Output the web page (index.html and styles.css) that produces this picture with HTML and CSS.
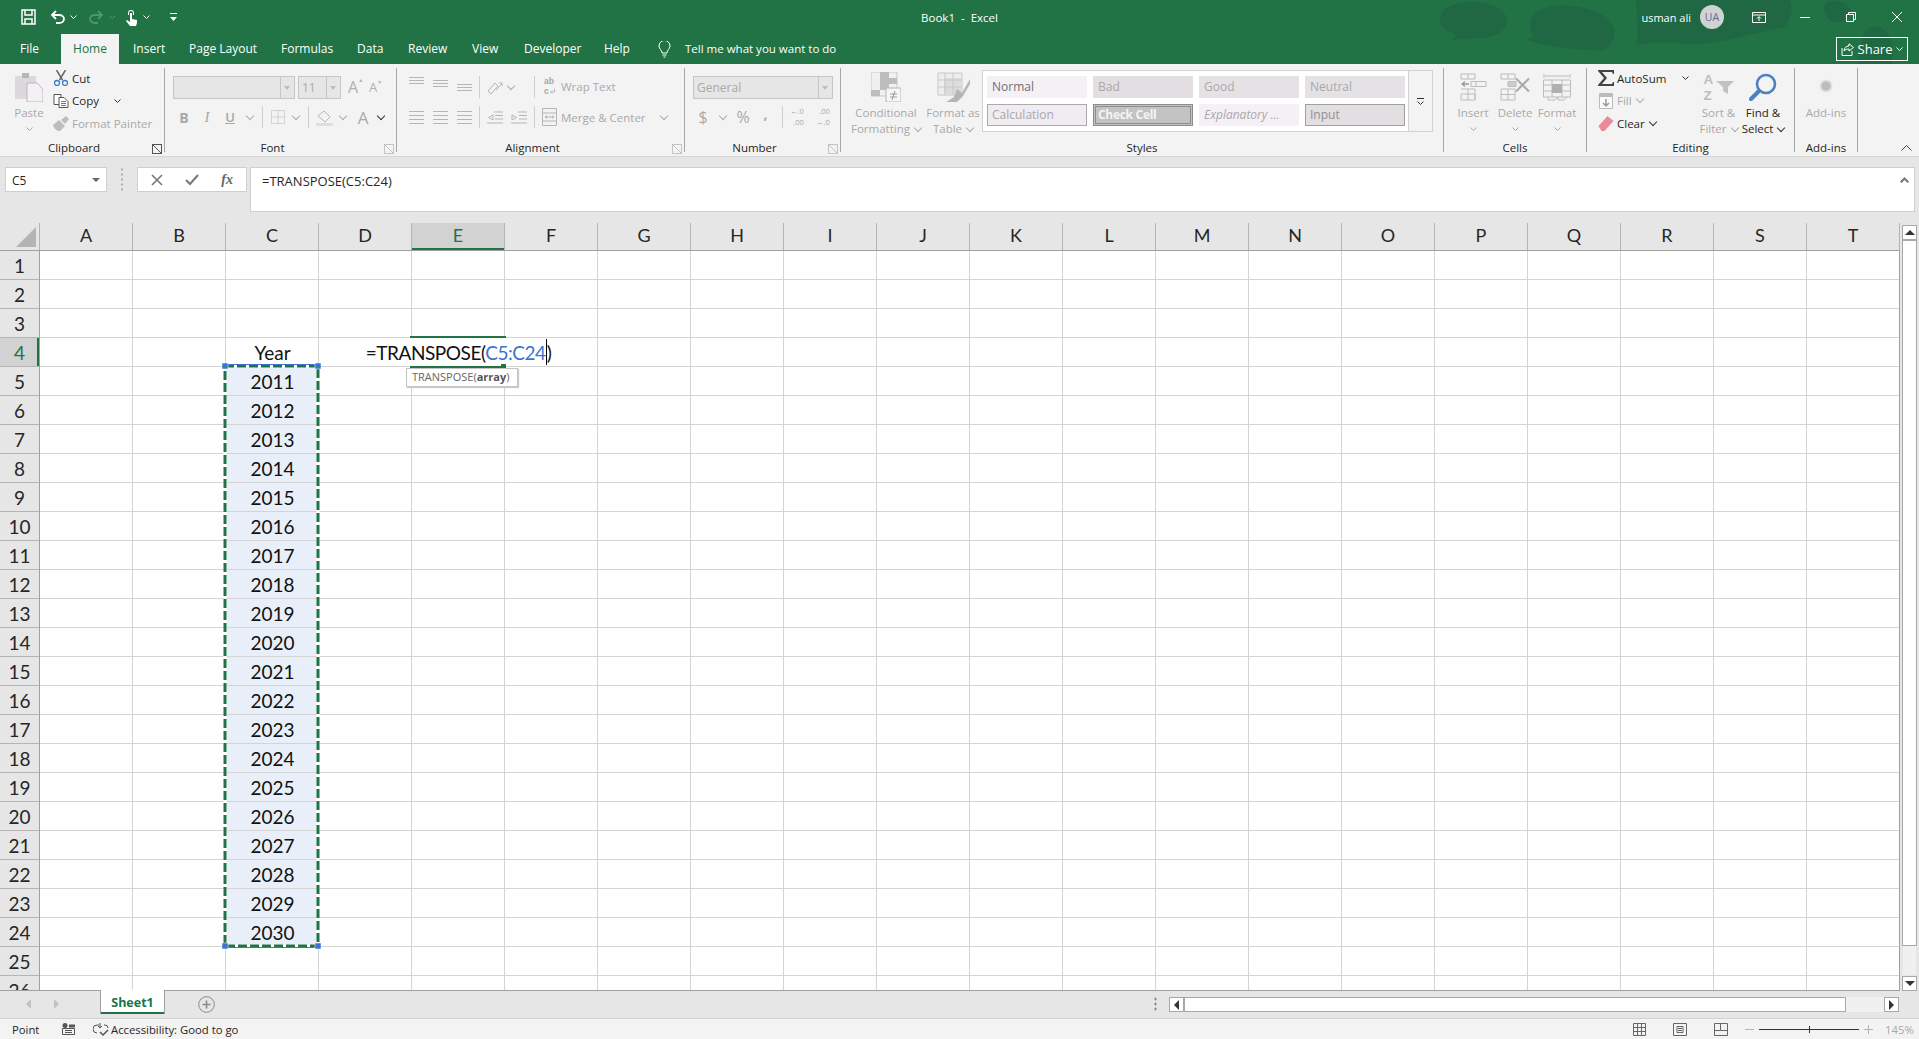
FILE: index.html
```html
<!DOCTYPE html>
<html lang="en">
<head>
  <meta charset="UTF-8">
  <title>Book1 - Excel</title>
  <link rel="stylesheet" href="styles.css">
</head>
<body>
  <header class="titlebar">
    <svg class="blobs" width="1919" height="64" viewBox="0 0 1919 64">
      <path d="M1440 20c0-12 14-18 32-18s35 7 35 19c0 11-14 18-30 17l-26 2 6-6c-10-2-17-7-17-14z"/>
      <path d="M1530 22c2-12 20-18 42-16s43 12 43 26c0 6-4 14-10 18-20 1-48-2-72-8l-8-3 8-2c-2-4-3-10-3-15z"/>
      <path d="M1636 0h154c4 10 0 24-8 28-30 4-60 18-96 16-20-2-36-2-50 1 4-14 0-30 0-45z"/>
      <path d="M1828 2c8-4 20 0 22 8s-8 14-16 12-14-16-6-20z"/>
      <path d="M1862 38c2-10 12-14 20-10s12 16 10 36h-34z"/>
    </svg>
    <div class="title-row">
      <div class="qat">
        <svg width="15" height="16" viewBox="0 0 15 16" fill="none" stroke="#fff" stroke-width="1.5"><path d="M1 1h13v14H1z"/><path d="M4 1v5h7V1M4 15v-5h7v5"/></svg>
        <svg class="qat-undo" width="15" height="14" viewBox="0 0 15 14" fill="none" stroke="#fff" stroke-width="1.8"><path d="M6 1L2 5l4 4M2 5h7c3 0 5 2 5 4s-2 4-5 4H6"/></svg>
        <svg class="caret" width="7" height="4" viewBox="0 0 7 4" fill="none" stroke="#fff"><path d="M.5.5l3 3 3-3"/></svg>
        <svg class="qat-redo" width="15" height="14" viewBox="0 0 15 14" fill="none" stroke="#4d9870" stroke-width="1.8"><path d="M9 1l4 4-4 4M13 5H6C3 5 1 7 1 9s2 4 5 4h3"/></svg>
        <svg class="caret" width="7" height="4" viewBox="0 0 7 4" fill="none" stroke="#4d9870"><path d="M.5.5l3 3 3-3"/></svg>
        <svg class="qat-touch" width="13" height="17" viewBox="0 0 13 17" fill="#fff"><path d="M3 4a3 3 0 016 0v2H8V4a2 2 0 00-4 0v2H3z"/><path d="M5 4h2v6l5 1v3l-1 3H5L1 12l1-1 3 2z"/></svg>
        <svg class="caret" width="7" height="4" viewBox="0 0 7 4" fill="none" stroke="#fff"><path d="M.5.5l3 3 3-3"/></svg>
        <svg class="qat-more" width="7" height="8" viewBox="0 0 7 8" fill="#fff"><path d="M0 0h7v1H0zM0 4h7L3.500 8z"/></svg>
      </div>
      <div class="doc-title">Book1&nbsp; - &nbsp;Excel</div>
      <div class="account">
        <span class="user-name">usman ali</span>
        <span class="avatar">UA</span>
        <svg class="win-display" width="14" height="11" viewBox="0 0 14 11" fill="none" stroke="#fff"><path d="M.5.5h13v10H.5zM.5 3h13M7 9V5M5 6.500L7 4.500l2 2"/></svg>
        <svg class="win-min" width="10" height="1" viewBox="0 0 10 1"><path d="M0 0h10v1H0z" fill="#fff"/></svg>
        <svg class="win-restore" width="10" height="10" viewBox="0 0 10 10" fill="none" stroke="#fff"><path d="M.5 2.500h7v7h-7zM2.500 2.500v-2h7v7h-2"/></svg>
        <svg class="win-close" width="10" height="10" viewBox="0 0 10 10" fill="none" stroke="#fff"><path d="M0 0l10 10M10 0L0 10"/></svg>
      </div>
    </div>
    <nav class="tabs">
      <span>File</span>
      <span class="tab-active">Home</span>
      <span>Insert</span>
      <span>Page Layout</span>
      <span>Formulas</span>
      <span>Data</span>
      <span>Review</span>
      <span>View</span>
      <span>Developer</span>
      <span>Help</span>
      <span class="tell">
        <svg width="13" height="17" viewBox="0 0 13 17" fill="none" stroke="#fff"><path d="M4 12c0-3-3-4-3-7a5.500 5.500 0 0111 0c0 3-3 4-3 7zM4.500 14h4M5.500 16h2"/></svg>
        Tell me what you want to do
      </span>
      <span class="share">
        <svg width="13" height="13" viewBox="0 0 13 13" fill="none" stroke="#fff"><path d="M1 5v7.500h10V8M3 8c0-3 2-5 5-5V.8l4.500 3.700L8 8V6C6 6 4 6.500 3 8z"/></svg>
        Share
        <svg width="7" height="4" viewBox="0 0 7 4" fill="none" stroke="#fff"><path d="M.5.5l3 3 3-3"/></svg>
      </span>
    </nav>
  </header>

  <section class="ribbon">
    <div class="group g-clipboard">
      <div class="group-body">
        <div class="big paste off">
          <svg width="28" height="30" viewBox="0 0 28 30"><path d="M0 4h21v23H0z" fill="#dcd8dc"/><path d="M7 1h7v5H7z" fill="#b9b5b9"/><path d="M12 11h10l6 6v13H12z" fill="#f4f0f6" stroke="#b9b5b9"/></svg>
          <span>Paste</span>
          <svg class="caret-line" width="7" height="4" viewBox="0 0 7 4" fill="none" stroke="#a8a8a8"><path d="M.5.5l3 3 3-3"/></svg>
        </div>
        <div class="stack">
          <div class="small">
            <svg width="15" height="16" viewBox="0 0 15 16" fill="none"><path d="M3 0l6 10M12 0L6 10" stroke="#666" stroke-width="1.500"/><circle cx="3.500" cy="13" r="2.500" stroke="#3f7fc4" stroke-width="1.300"/><circle cx="11.500" cy="13" r="2.500" stroke="#3f7fc4" stroke-width="1.300"/></svg>
            <span>Cut</span>
          </div>
          <div class="small">
            <svg width="15" height="14" viewBox="0 0 15 14" fill="#fff" stroke="#555"><path d="M.5.500h7v10h-7z"/><path d="M5.500 3.500h5l4 4v6h-9z"/><path d="M7.500 7.500h5M7.500 9.500h5M7.500 11.500h5" stroke="#3f7fc4"/></svg>
            <span>Copy</span>
            <svg class="copy-caret" width="7" height="4" viewBox="0 0 7 4" fill="none" stroke="#333"><path d="M.5.5l3 3 3-3"/></svg>
          </div>
          <div class="small off">
            <svg width="16" height="15" viewBox="0 0 16 15" fill="#bdbdbd"><path d="M0 9l6-5 6 6-5 5c-3 0-6-2-7-6z"/><path d="M8 4l5-4 3 3-4 5z"/></svg>
            <span>Format Painter</span>
          </div>
        </div>
      </div>
      <div class="group-foot"><span>Clipboard</span><i class="launcher dark"></i></div>
    </div>

    <div class="group g-font">
      <div class="group-body rows">
        <div class="font-top">
          <span class="combo font-name"><b></b></span>
          <span class="combo font-size"><em>11</em><b></b></span>
          <span class="grow-a big-a">A<sup>&#9650;</sup></span>
          <span class="grow-a small-a">A<sup>&#9660;</sup></span>
        </div>
        <div class="font-bottom off">
          <strong class="glyph">B</strong>
          <em class="glyph serif">I</em>
          <span class="glyph under">U</span>
          <i class="chev"></i>
          <i class="vsep"></i>
          <svg width="14" height="14" viewBox="0 0 14 14" fill="none" stroke="#b5b5b5" stroke-dasharray="1 1"><path d="M.5.5h13v13H.5zM7 .5v13M.5 7h13"/></svg>
          <i class="chev"></i>
          <i class="vsep"></i>
          <svg width="17" height="17" viewBox="0 0 17 17"><path d="M2 7l6-5 6 6-5 5z" fill="none" stroke="#b5b5b5"/><path d="M0 14h17v3H0z" fill="#dedede"/></svg>
          <i class="chev"></i>
          <span class="glyph big-letter">A</span>
          <i class="chev dark"></i>
        </div>
      </div>
      <div class="group-foot"><span>Font</span><i class="launcher"></i></div>
    </div>

    <div class="group g-align">
      <div class="group-body align-grid off">
        <i class="lines top"></i>
        <i class="lines mid"></i>
        <i class="lines bot"></i>
        <i class="vsep"></i>
        <svg width="16" height="15" viewBox="0 0 16 15" fill="none" stroke="#b5b5b5"><path d="M1 11l7-8 3 3-7 8zM9 10l6-6M12 3h3v3"/></svg>
        <i class="chev start"></i>
        <i class="vsep"></i>
        <div class="wrap-cell">
          <span class="ab">ab<br>c<svg width="5" height="5" viewBox="0 0 5 5" fill="none" stroke="#b5b5b5"><path d="M4.500 0v3H1M2 1.500L.5 3 2 4.500"/></svg></span>
          <span>Wrap Text</span>
        </div>
        <i class="lines left"></i>
        <i class="lines center"></i>
        <i class="lines right"></i>
        <i class="vsep"></i>
        <svg width="16" height="13" viewBox="0 0 16 13" fill="none" stroke="#b5b5b5"><path d="M7 1h9M8 4.500h8M8 8h8M0 12h16M6 4L1.500 6.500 6 9z"/></svg>
        <svg width="16" height="13" viewBox="0 0 16 13" fill="none" stroke="#b5b5b5"><path d="M7 1h9M8 4.500h8M8 8h8M0 12h16M1 4l4.500 2.500L1 9z"/></svg>
        <i class="vsep"></i>
        <div class="merge-cell">
          <svg width="15" height="18" viewBox="0 0 15 18" fill="none" stroke="#b5b5b5"><path d="M.5.5h14v17H.5zM.5 5h14M.5 13h14M3 9h9M5 7.500L3 9l2 1.500M10 7.500L12 9l-2 1.500"/></svg>
          <span>Merge &amp; Center</span>
          <i class="chev push"></i>
        </div>
      </div>
      <div class="group-foot"><span>Alignment</span><i class="launcher"></i></div>
    </div>

    <div class="group g-number">
      <div class="group-body rows">
        <div class="font-top">
          <span class="combo number-format"><em>General</em><b></b></span>
        </div>
        <div class="number-bottom off">
          <span class="glyph dollar">$</span>
          <i class="chev"></i>
          <span class="glyph percent">%</span>
          <span class="glyph comma">,</span>
          <i class="vsep"></i>
          <span class="decimal">&#8592;.0<br>.00</span>
          <span class="decimal">.00<br>&#8594;.0</span>
        </div>
      </div>
      <div class="group-foot"><span>Number</span><i class="launcher"></i></div>
    </div>

    <div class="group g-styles">
      <div class="group-body">
        <div class="big off cond">
          <svg width="30" height="30" viewBox="0 0 30 30"><path d="M0 0h26v24H0z" fill="#f0f0f0" stroke="#c8c8c8"/><path d="M9 0h9v6h8v6h-8v6H9v6H0v-6h9z" fill="#bdbdbd"/><path d="M15 16h15v14H15z" fill="#f6f6f6" stroke="#b5b5b5"/><path d="M19 22h7M19 25h7M24 19l-3 9" stroke="#999" fill="none"/></svg>
          <span>Conditional</span>
          <span>Formatting <i class="chev inline"></i></span>
        </div>
        <div class="big off astable">
          <svg width="33" height="30" viewBox="0 0 33 30"><path d="M1 1h24v22H1z" fill="#eee" stroke="#c8c8c8"/><path d="M7 6h18v17H7z" fill="#dcdcdc"/><path d="M8 1v22M16 1v22M1 8h24M1 15h24" stroke="#c8c8c8"/><path d="M9 30l8-5 3-8 5 4 8-14v5l-7 12-6 6z" fill="#b5b5b5"/></svg>
          <span>Format as</span>
          <span>Table <i class="chev inline"></i></span>
        </div>
        <div class="gallery">
          <div class="gallery-cells">
            <span class="style normal">Normal</span>
            <span class="style bad">Bad</span>
            <span class="style good">Good</span>
            <span class="style neutral">Neutral</span>
            <span class="style calc">Calculation</span>
            <span class="style check">Check Cell</span>
            <span class="style expl">Explanatory ...</span>
            <span class="style input">Input</span>
          </div>
          <div class="gallery-more">
            <svg width="7" height="7" viewBox="0 0 7 7" fill="none" stroke="#333"><path d="M0 .5h7M.5 3.500l3 3 3-3"/></svg>
          </div>
        </div>
      </div>
      <div class="group-foot"><span>Styles</span></div>
    </div>

    <div class="group g-cells">
      <div class="group-body">
        <div class="big off">
          <svg width="27" height="27" viewBox="0 0 27 27" fill="none" stroke="#bcbcbc"><path d="M1 .5h14v5H1zM8 .5v5M1 20.500h14v6H1zM1 15.500h14v11M8 15.500v11M11 8h15v5H11zM16 8v5"/><path d="M2 10.500h7M5 8l-3 2.500L5 13" stroke="#999" stroke-width="1.300"/></svg>
          <span>Insert</span>
          <svg class="caret-line" width="7" height="4" viewBox="0 0 7 4" fill="none" stroke="#a8a8a8"><path d="M.5.5l3 3 3-3"/></svg>
        </div>
        <div class="big off">
          <svg width="30" height="27" viewBox="0 0 30 27" fill="none" stroke="#bcbcbc"><path d="M1 .5h14v5H1zM8 .5v5M1 15.500h14v11H1zM8 15.500v11M1 21h14"/><path d="M8 8h8v5H8z" fill="#ccc"/><path d="M16 5l13 13M29 5L16 18" stroke="#aaa" stroke-width="2"/></svg>
          <span>Delete</span>
          <svg class="caret-line" width="7" height="4" viewBox="0 0 7 4" fill="none" stroke="#a8a8a8"><path d="M.5.5l3 3 3-3"/></svg>
        </div>
        <div class="big off">
          <svg width="28" height="28" viewBox="0 0 28 28" fill="none" stroke="#bcbcbc"><path d="M1 1v4M27 1v4M2 3h24"/><path d="M.5 7h27v17H.5zM9 7v17M19 7v17M.5 12h27M.5 18h27"/><path d="M9 11h10v9H9z" fill="#b0b0b0" stroke="none"/><path d="M5 24v3h7l3-3M15 24v3h6l3-3"/></svg>
          <span>Format</span>
          <svg class="caret-line" width="7" height="4" viewBox="0 0 7 4" fill="none" stroke="#a8a8a8"><path d="M.5.5l3 3 3-3"/></svg>
        </div>
      </div>
      <div class="group-foot"><span>Cells</span></div>
    </div>

    <div class="group g-editing">
      <div class="group-body">
        <div class="stack">
          <div class="small">
            <svg width="16" height="16" viewBox="0 0 16 16"><path d="M0 0h16v4h-1l-1-2H4l5 6-5 6h10l1-2h1v4H0v-1l6-7-6-7z" fill="#444"/></svg>
            <span>AutoSum</span>
            <svg class="sum-caret" width="7" height="4" viewBox="0 0 7 4" fill="none" stroke="#333"><path d="M.5.5l3 3 3-3"/></svg>
          </div>
          <div class="small off">
            <svg width="14" height="16" viewBox="0 0 14 16"><path d="M.5.500h13v15H.5z" fill="#fafafa" stroke="#bbb"/><path d="M1 1h12v3H1z" fill="#bbb"/><path d="M7 6v7M4 10l3 3 3-3" fill="none" stroke="#999" stroke-width="1.500"/></svg>
            <span>Fill</span>
            <i class="chev fill-chev"></i>
          </div>
          <div class="small">
            <svg width="15" height="15" viewBox="0 0 15 15"><path d="M0 10l9-10 6 5-9 10H3z" fill="#ec8a9a"/></svg>
            <span>Clear</span>
            <i class="chev dark fill-chev"></i>
          </div>
        </div>
        <div class="big off sort">
          <div class="sort-icon">
            <span class="az">A<br>Z</span>
            <svg width="18" height="13" viewBox="0 0 18 13"><path d="M0 0h18l-6 6v7l-5-3V6z" fill="#c2c2c2"/></svg>
          </div>
          <span>Sort &amp;</span>
          <span>Filter <i class="chev inline"></i></span>
        </div>
        <div class="big find">
          <svg width="28" height="28" viewBox="0 0 28 28" fill="none" stroke="#4a80bf"><circle cx="17" cy="11" r="9" stroke-width="2.600"/><path d="M10 18l-8 8" stroke-width="4" stroke-linecap="round"/></svg>
          <span>Find &amp;</span>
          <span>Select <i class="chev dark inline"></i></span>
        </div>
      </div>
      <div class="group-foot"><span>Editing</span></div>
    </div>

    <div class="group g-addins">
      <div class="group-body">
        <div class="big off">
          <i class="addin-dot"></i>
          <span>Add-ins</span>
        </div>
      </div>
      <div class="group-foot"><span>Add-ins</span></div>
    </div>

    <svg class="collapse" width="11" height="6" viewBox="0 0 11 6" fill="none" stroke="#444"><path d="M.5 5.500l5-5 5 5"/></svg>
  </section>

  <section class="formula-bar">
    <div class="name-box">C5<i class="tri"></i></div>
    <div class="grip"></div>
    <div class="fx-box">
      <svg width="12" height="12" viewBox="0 0 12 12" fill="none" stroke="#777" stroke-width="1.600"><path d="M1 1l10 10M11 1L1 11"/></svg>
      <svg width="14" height="12" viewBox="0 0 14 12" fill="none" stroke="#777" stroke-width="2"><path d="M1 6l4 4 8-9"/></svg>
      <em>fx</em>
    </div>
    <div class="formula-input">
      <span>=TRANSPOSE(C5:C24)</span>
      <svg width="9" height="6" viewBox="0 0 9 6" fill="#777"><path d="M4.500 0L9 4.500 7.500 6l-3-3-3 3L0 4.500z"/></svg>
    </div>
  </section>

  <section class="workbook">
    <div class="sheet">
      <div class="col-heads">
        <div class="corner"><i></i></div>
        <span>A</span><span>B</span><span>C</span><span>D</span><span class="head-on">E</span><span>F</span><span>G</span><span>H</span><span>I</span><span>J</span>
        <span>K</span><span>L</span><span>M</span><span>N</span><span>O</span><span>P</span><span>Q</span><span>R</span><span>S</span><span>T</span>
      </div>
      <div class="sheet-main">
        <div class="row-heads">
          <span>1</span><span>2</span><span>3</span><span class="head-on">4</span><span>5</span><span>6</span><span>7</span><span>8</span><span>9</span>
          <span>10</span><span>11</span><span>12</span><span>13</span><span>14</span><span>15</span><span>16</span><span>17</span><span>18</span>
          <span>19</span><span>20</span><span>21</span><span>22</span><span>23</span><span>24</span><span>25</span><span>26</span>
        </div>
        <div class="cells">
          <div class="year-col">
            <span class="year-title">Year</span>
            <span>2011</span><span>2012</span><span>2013</span><span>2014</span><span>2015</span><span>2016</span><span>2017</span><span>2018</span><span>2019</span><span>2020</span>
            <span>2021</span><span>2022</span><span>2023</span><span>2024</span><span>2025</span><span>2026</span><span>2027</span><span>2028</span><span>2029</span><span>2030</span>
          </div>
          <div class="edit-cell"><span>=TRANSPOSE(<b>C5:C24</b><i class="text-cursor"></i>)</span></div>

          <svg class="ants" width="99" height="587" viewBox="0 0 99 587" fill="none">
            <rect x="3" y="3" width="93" height="580" stroke="#fff" stroke-width="3"/>
            <rect x="3" y="3" width="93" height="580" stroke="#217346" stroke-width="3" stroke-dasharray="9 3"/>
            <path d="M3 1.500h93M3 584.500h93" stroke="#3a74d0"/>
            <path d="M0 0h6v6H0zM93 0h6v6h-6zM0 580h6v6H0zM93 580h6v6h-6z" fill="#3a74d0" stroke="#fff" stroke-width=".5"/>
          </svg>
          <div class="edit-frame"><i></i></div>
          <div class="arg-tip">TRANSPOSE(<b>array</b>)</div>
        </div>
      </div>
    </div>
    <aside class="vscroll">
      <div class="sbtn"><i class="tri up"></i></div>
      <div class="vthumb"></div>
      <div class="sbtn"><i class="tri"></i></div>
    </aside>
  </section>

  <section class="sheet-tabs">
    <div class="tab-nav"><i class="nav-l"></i><i class="nav-r"></i></div>
    <div class="sheet-tab">Sheet1</div>
    <div class="add-sheet">
      <svg width="17" height="17" viewBox="0 0 17 17" fill="none" stroke="#8a8a8a"><circle cx="8.500" cy="8.500" r="7.800"/><path d="M8.500 4.500v8M4.500 8.500h8" stroke-width="1.600"/></svg>
    </div>
    <div class="tab-dots"></div>
    <div class="hscroll">
      <div class="sbtn"><i class="nav-l dark"></i></div>
      <div class="hthumb"></div>
      <div class="sbtn"><i class="nav-r dark"></i></div>
    </div>
  </section>

  <footer class="statusbar">
    <span class="mode">Point</span>
    <svg class="macro" width="13" height="12" viewBox="0 0 13 12" fill="none" stroke="#555"><path d="M.5 5.500h12v6H.5zM3 7.500h7M3 9.500h7"/><circle cx="3" cy="2.500" r="2.500" fill="#555" stroke="none"/><path d="M7 1.500h6v3H7z" fill="#555" stroke="none"/></svg>
    <svg class="a11y" width="16" height="15" viewBox="0 0 16 15" fill="none" stroke="#555"><path d="M6 3H4a3.500 3.500 0 000 8M7 1v5M5 4l2 2 2-2M11 3h1a3 3 0 013 3"/><path d="M7 10l3 3 5-5" stroke-width="1.500"/></svg>
    <span class="a11y-text">Accessibility: Good to go</span>
    <div class="views">
      <svg width="13" height="13" viewBox="0 0 13 13" fill="none" stroke="#666"><path d="M.5.5h12v12H.5zM4.500.5v12M8.500.5v12M.5 4.500h12M.5 8.500h12"/></svg>
      <svg width="14" height="13" viewBox="0 0 14 13" fill="none" stroke="#666"><path d="M.5.5h13v12H.5zM4 3.500h6v6H4zM5 5.500h4M5 7.500h4"/></svg>
      <svg width="14" height="13" viewBox="0 0 14 13" fill="none" stroke="#666"><path d="M.5.5h13v12H.5zM.5 7.500h6v-7M6.500 7.500h7"/></svg>
    </div>
    <div class="zoom">
      <i class="zoom-minus"></i>
      <div class="slider"><i></i></div>
      <i class="zoom-plus"></i>
      <span>145%</span>
    </div>
  </footer>
</body>
</html>
```
FILE: styles.css
```css
* {
  box-sizing: border-box;
}
body {
  margin: 0;
  width: 1919px;
  height: 1039px;
  overflow: hidden;
  background: #e6e6e6;
  font-family: "Open Sans", "Liberation Sans", sans-serif;
  font-size: 11.5px;
  color: #262626;
}
i, em {
  font-style: normal;
}

/* title bar */
.titlebar {
  position: relative;
  height: 64px;
  background: #217346;
  color: #fff;
}
.blobs {
  position: absolute;
  left: 0;
  top: 0;
  fill: #206843;
}
.title-row {
  position: relative;
  height: 34px;
  display: grid;
  grid-template-columns: 1fr auto 1fr;
  align-items: center;
}
.qat {
  display: flex;
  align-items: center;
  padding: 0 0 0 21px;
}
.qat-undo { margin-left: 14px; }
.caret { margin-left: 5px; }
.qat-redo { margin-left: 12px; }
.qat-touch { margin-left: 9px; }
.qat-more { margin-left: 20px; }
.doc-title {
  font-size: 11.5px;
}
.account {
  display: flex;
  align-items: center;
  justify-content: flex-end;
}
.user-name {
  font-size: 11px;
}
.avatar {
  width: 24px;
  height: 24px;
  margin: 0 0 0 9px;
  border-radius: 50%;
  background: #d2d2d2;
  color: #5b6f95;
  font-size: 10.5px;
  line-height: 24px;
  text-align: center;
}
.win-display { margin-left: 28px; }
.win-min { margin-left: 34px; }
.win-restore { margin-left: 36px; }
.win-close { margin-left: 36px; margin-right: 17px; }

.tabs {
  position: relative;
  height: 30px;
  display: grid;
  grid-template-columns: 61px 58px 56px 92px 76px 51px 64px 52px 80px 61px 1fr auto;
  font-size: 12px;
}
.tabs span {
  padding-left: 14px;
  line-height: 30px;
}
.tabs span:first-child {
  padding-left: 20px;
}
.tabs .tab-active {
  padding-left: 0;
  text-align: center;
  background: #f3f3f3;
  color: #217346;
}
.tabs .tell {
  padding-left: 7px;
  display: flex;
  align-items: center;
  gap: 14px;
  font-size: 11.5px;
}
.tabs .share {
  width: 72px;
  height: 24px;
  margin: 3px 11px 0 0;
  padding: 0;
  border: 1px solid #fff;
  display: flex;
  align-items: center;
  justify-content: center;
  gap: 4px;
  line-height: 22px;
  font-size: 13px;
}

/* ribbon */
.ribbon {
  height: 93px;
  display: flex;
  background: #f3f3f3;
  border-bottom: 1px solid #d4d4d4;
}
.group {
  height: 84px;
  margin-top: 4px;
  display: flex;
  flex-direction: column;
  border-right: 1px solid #a6a6a6;
}
.g-clipboard { width: 165px; }
.g-font { width: 232px; }
.g-align { width: 288px; }
.g-number { width: 156px; }
.g-styles { width: 603px; }
.g-cells { width: 143px; }
.g-editing { width: 208px; }
.g-addins { width: 63px; }
.group-body {
  height: 74px;
  display: flex;
}
.group-foot {
  height: 10px;
  display: flex;
  line-height: 12px;
  font-size: 11.5px;
}
.group-foot span {
  flex: 1;
  text-align: center;
}
.launcher {
  width: 16px;
  position: relative;
}
.launcher::before {
  content: "";
  display: block;
  width: 9px;
  height: 9px;
  margin: 2px 0 0 4px;
  border: solid #c4c4c4;
  border-width: 1px 0 0 1px;
  background: linear-gradient(45deg, transparent 45%, #c4c4c4 45%, #c4c4c4 55%, transparent 55%);
  box-shadow: inset -2px -2px 0 -1px #c4c4c4;
}
.launcher.dark::before {
  border-color: #555;
  background: linear-gradient(45deg, transparent 45%, #555 45%, #555 55%, transparent 55%);
  box-shadow: inset -2px -2px 0 -1px #555;
}
.off {
  color: #a9a9a9;
}
.big {
  display: flex;
  flex-direction: column;
  align-items: center;
  white-space: nowrap;
  line-height: 16px;
  padding-top: 4px;
}
.big > svg:first-child, .addin-dot, .sort-icon {
  height: 30px;
  margin-bottom: 3px;
}
.big > svg.caret-line {
  margin-top: 6px;
}
.paste {
  width: 58px;
}
.stack {
  display: flex;
  flex-direction: column;
  margin-top: -1px;
  white-space: nowrap;
}
.small {
  height: 22.500px;
  flex: none;
  display: flex;
  align-items: center;
}
.small svg:first-child {
  width: 19px;
  flex: none;
  padding-right: 3px;
}
.g-clipboard .stack {
  margin-left: -5px;
}
.copy-caret { margin-left: 15px; }
.sum-caret { margin-left: 16px; }
.fill-chev { margin-left: 4px; }

.chev {
  display: block;
  width: 7px;
  height: 7px;
  position: relative;
  top: -1px;
  justify-self: center;
}
.chev::before {
  content: "";
  display: block;
  width: 5px;
  height: 5px;
  margin-left: 1px;
  border: solid #adadad;
  border-width: 0 1px 1px 0;
  transform: rotate(45deg);
}
.chev.dark::before {
  border-color: #333;
}
.chev.inline {
  display: inline-block;
  margin-left: 1px;
}
.chev.start {
  justify-self: start;
}
.chev.push {
  margin-left: auto;
  margin-right: 1px;
}

/* font group */
.rows {
  display: block;
  padding: 4px 0 0 8px;
}
.font-top {
  height: 30px;
  display: flex;
  align-items: center;
}
.combo {
  height: 23px;
  display: flex;
  justify-content: space-between;
  background: #e6e6e6;
  border: 1px solid #c6c6c6;
  color: #a9a9a9;
}
.combo em {
  padding-left: 3px;
  font-size: 12px;
  line-height: 21px;
}
.combo b {
  width: 14px;
  border-left: 1px solid #c6c6c6;
  position: relative;
}
.combo b::after {
  content: "";
  position: absolute;
  left: 3px;
  top: 9px;
  border: 3.500px solid transparent;
  border-top: 4px solid #bdbdbd;
}
.font-name { width: 122px; justify-content: flex-end; }
.font-size { width: 43px; margin-left: 3px; }
.number-format { width: 140px; }
.grow-a {
  color: #b0b0b0;
  display: flex;
}
.big-a { font-size: 16px; margin-left: 7px; }
.small-a { font-size: 13px; margin-left: 6px; }
.grow-a sup {
  font-size: 5px;
  line-height: 8px;
}
.font-bottom {
  height: 30px;
  display: grid;
  grid-template-columns: 22px 24px 22px 16px 10px 21px 14px 12px 20px 16px 26px 8px;
  align-items: center;
  justify-items: center;
}
.glyph {
  color: #a9a9a9;
  font-size: 14px;
}
.glyph.serif {
  font-family: "Liberation Serif", serif;
  font-style: italic;
  font-size: 15px;
}
.glyph.under {
  text-decoration: underline;
  font-weight: 600;
  font-size: 13px;
}
.glyph.big-letter {
  font-size: 17px;
}
.vsep {
  display: block;
  width: 1px;
  height: 22px;
  background: #cfcfcf;
  justify-self: center;
}

/* alignment group */
.align-grid {
  display: grid;
  grid-template-columns: 24px 24px 24px 6px 25px 24px 6px 131px;
  grid-auto-rows: 30px;
  padding: 4px 0 0 7px;
  align-items: center;
  justify-items: center;
}
.lines {
  display: block;
  width: 15px;
  height: 7px;
  background: repeating-linear-gradient(to bottom, #b5b5b5 0 1px, transparent 1px 3px);
}
.lines.top { position: relative; top: -7px; }
.lines.mid { position: relative; top: -4px; }
.lines.bot { position: relative; top: 0; }
.lines.left, .lines.center, .lines.right {
  height: 13px;
  background: linear-gradient(#b5b5b5 0 1px, transparent 1px 4px, #b5b5b5 4px 5px, transparent 5px 8px, #b5b5b5 8px 9px, transparent 9px 12px, #b5b5b5 12px 13px);
}
.wrap-cell, .merge-cell {
  width: 100%;
  display: flex;
  align-items: center;
  white-space: nowrap;
}
.wrap-cell {
  margin-top: -2px;
  padding-left: 7px;
  gap: 5px;
}
.merge-cell {
  padding-left: 5px;
  gap: 4px;
}
.ab {
  width: 12px;
  flex: none;
  font-family: "Liberation Sans", sans-serif;
  font-size: 8.500px;
  line-height: 10px;
  font-weight: 700;
}
.ab svg {
  margin-left: 1px;
}

/* number group */
.number-bottom {
  height: 30px;
  display: grid;
  grid-template-columns: 20px 18px 24px 21px 12px 18px 8px 18px;
  align-items: center;
  justify-items: center;
}
.dollar, .percent {
  font-size: 16px;
}
.comma {
  font-weight: 700;
  position: relative;
  top: -4px;
}
.decimal {
  font-size: 7.500px;
  line-height: 11px;
  text-align: right;
}
.number-bottom .decimal:last-child {
  grid-column: 8;
}

/* styles group */
.cond { width: 78px; margin-left: 6px; }
.astable { width: 56px; }
.gallery {
  width: 451px;
  height: 62px;
  margin: 2px 0 0 1px;
  display: flex;
  background: #fff;
  border: 1px solid #d2d2d2;
}
.gallery-cells {
  width: 425px;
  padding: 5px 0 0 4px;
  display: grid;
  grid-template-columns: repeat(4, 100px);
  grid-auto-rows: 22px;
  gap: 6px;
}
.gallery-more {
  flex: 1;
  background: #f3f3f3;
  border-left: 1px solid #d2d2d2;
  display: flex;
  align-items: center;
  justify-content: center;
}
.style {
  padding-left: 4px;
  line-height: 20px;
  font-size: 12px;
  color: #a9a9a9;
  background: #f4f0f6;
  border: 1px solid transparent;
}
.normal { color: #707070; }
.bad { background: #e2dee2; }
.good, .neutral { background: #e5e2e6; }
.calc { background: #f0ecf2; border-color: #ababab; }
.check {
  background: #c3c3c3;
  border: 3px double #8c8c8c;
  color: #f4f4f4;
  font-weight: 700;
  line-height: 16px;
  padding-left: 2px;
  letter-spacing: -.3px;
}
.expl { font-style: italic; }
.input { background: #e2dee2; border-color: #a0a0a0; color: #909090; }

/* cells, editing, add-ins */
.g-cells .group-body {
  padding-left: 8px;
}
.g-cells .big {
  width: 42px;
}
.g-editing .stack {
  width: 109px;
  padding-left: 11px;
}
.sort { width: 45px; }
.find { width: 44px; color: #262626; }
.sort-icon {
  display: flex;
  align-items: flex-start;
}
.sort-icon svg {
  margin-top: 9px;
}
.az {
  width: 12px;
  font-family: "Liberation Sans", sans-serif;
  font-size: 13.500px;
  font-weight: 700;
  line-height: 15.500px;
  color: #bdbdbd;
}
.g-addins .group-body {
  justify-content: center;
}
.addin-dot {
  display: block;
  width: 30px;
  background: radial-gradient(circle at 50% 14px, #bdbdbd 0 4px, #d8d8d8 5px, transparent 7px);
}
.collapse {
  align-self: flex-end;
  margin: 0 0 5px 43px;
}

/* formula bar */
.formula-bar {
  height: 66px;
  padding: 10px 4px 0 5px;
  display: flex;
  align-items: flex-start;
}
.name-box {
  width: 102px;
  height: 25px;
  padding: 1px 0 0 6px;
  display: flex;
  align-items: center;
  justify-content: space-between;
  background: #fff;
  border: 1px solid #cfcfcf;
  font-size: 12px;
}
.tri {
  display: block;
  border: 4px solid transparent;
  border-top: 4px solid #666;
  border-bottom: 0;
  margin-right: 6px;
}
.tri.up {
  border-top: 0;
  border-bottom: 5px solid #333;
  border-left-width: 5px;
  border-right-width: 5px;
  margin: 0;
}
.grip {
  width: 30px;
  height: 25px;
  background: radial-gradient(circle, #aaa 1px, transparent 1.200px) center / 2px 5px repeat-y;
}
.fx-box {
  width: 110px;
  height: 25px;
  display: flex;
  align-items: center;
  justify-content: space-between;
  padding: 0 13px;
  background: #fff;
  border: 1px solid #cfcfcf;
}
.fx-box em {
  font-family: "Liberation Serif", serif;
  font-style: italic;
  font-weight: 700;
  font-size: 14px;
  color: #666;
}
.formula-input {
  width: 1665px;
  height: 45px;
  margin-left: 3px;
  padding: 4px 5px 0 11px;
  display: flex;
  justify-content: space-between;
  align-items: flex-start;
  background: #fff;
  border: 1px solid #cfcfcf;
  font-size: 13px;
  line-height: 18px;
}
.formula-input svg {
  margin-top: 5px;
}

/* sheet */
.workbook {
  height: 768px;
  display: flex;
}
.sheet {
  width: 1900px;
}
.col-heads {
  height: 28px;
  display: flex;
  font-family: Lato, "Open Sans", sans-serif;
  font-size: 18px;
  border-bottom: 1px solid #a0a0a0;
}
.col-heads span {
  width: 93px;
  text-align: center;
  line-height: 25px;
  border-right: 1px solid #b4b4b4;
}
.corner {
  width: 40px;
  border-right: 1px solid #b4b4b4;
  position: relative;
}
.corner i {
  position: absolute;
  right: 3px;
  bottom: 3px;
  border-style: solid;
  border-width: 0 0 20px 20px;
  border-color: transparent transparent #b4b4b4;
}
.col-heads .head-on {
  background: #d2d2d2;
  color: #217346;
  box-shadow: inset 0 -2px 0 #217346;
}
.sheet-main {
  height: 740px;
  display: flex;
  border-bottom: 1px solid #a0a0a0;
  overflow: hidden;
}
.row-heads {
  width: 40px;
  flex: none;
  font-family: Lato, "Open Sans", sans-serif;
  font-size: 19px;
  border-right: 1px solid #a0a0a0;
}
.row-heads span {
  display: block;
  height: 29px;
  line-height: 29px;
  text-align: center;
  border-bottom: 1px solid #b4b4b4;
}
.row-heads .head-on {
  background: #d2d2d2;
  color: #217346;
  box-shadow: inset -2px 0 0 #217346;
}
.cells {
  position: relative;
  width: 1860px;
  display: grid;
  grid-template-columns: repeat(20, 93px);
  grid-auto-rows: 29px;
  font-family: Lato, "Open Sans", sans-serif;
  font-size: 19px;
  color: #111;
  background-color: #fff;
  background-image:
    repeating-linear-gradient(to right, transparent 0 92px, #d4d4d4 92px 93px),
    repeating-linear-gradient(to bottom, transparent 0 28px, #d4d4d4 28px 29px);
  border-right: 1px solid #a0a0a0;
}
.year-col {
  grid-column: 3;
  grid-row: 4 / span 21;
  display: flex;
  flex-direction: column;
}
.year-col span {
  height: 29px;
  line-height: 29px;
  text-align: center;
  background: #e8eff9;
  border: solid #d4d4d4;
  border-width: 0 0 1px;
}
.year-col .year-title {
  background: none;
}
.edit-cell {
  grid-column: 5;
  grid-row: 4;
  display: flex;
  justify-content: center;
  white-space: nowrap;
  line-height: 29px;
  letter-spacing: -.45px;
}
.edit-cell span {
  flex: none;
  background: #fff;
  height: 28px;
}
.edit-cell b {
  font-weight: 400;
  color: #3a74d0;
}
.text-cursor {
  display: inline-block;
  width: 1px;
  height: 26px;
  vertical-align: top;
  margin-top: 1px;
  background: #000;
}
.ants {
  position: absolute;
  left: 182px;
  top: 112px;
}
.edit-frame {
  position: absolute;
  left: 370px;
  top: 85px;
  width: 96px;
  height: 32px;
  border: solid #217346;
  border-width: 2px 0;
}
.edit-frame i {
  position: absolute;
  right: 0;
  bottom: -3px;
  width: 5px;
  height: 5px;
  background: #217346;
}
.arg-tip {
  position: absolute;
  left: 366px;
  top: 117px;
  width: 112px;
  height: 19px;
  padding-left: 5px;
  background: #fff;
  border: 1px solid #c4c4c4;
  box-shadow: 1px 1px 1px #ccc;
  font-family: "Open Sans", sans-serif;
  font-size: 11px;
  line-height: 16px;
  color: #666;
  white-space: nowrap;
}
.arg-tip b {
  color: #555;
}

/* scrollbars */
.vscroll {
  width: 19px;
  padding: 2px 2px 0;
  display: flex;
  flex-direction: column;
}
.sbtn {
  width: 15px;
  height: 15px;
  flex: none;
  display: flex;
  align-items: center;
  justify-content: center;
  background: #fff;
  border: 1px solid #a8a8a8;
}
.vthumb {
  height: 706px;
  margin-bottom: 30px;
  background: #fff;
  border: 1px solid #a8a8a8;
  box-shadow: 0 30px 0 -1px #f0f0f0;
}
.vscroll .sbtn:last-child .tri {
  border-left-width: 5px;
  border-right-width: 5px;
  border-top: 5px solid #333;
  margin: 0;
}

/* sheet tabs */
.sheet-tabs {
  height: 27px;
  display: flex;
}
.tab-nav {
  width: 100px;
  padding: 7px 0 0 26px;
  display: flex;
  gap: 23px;
}
.nav-l, .nav-r {
  display: block;
  height: 0;
  margin-top: 1px;
  border: 5px solid transparent;
  border-left-width: 0;
  border-right: 5px solid #c2c2c2;
}
.nav-r {
  border-right-width: 0;
  border-left: 5px solid #c2c2c2;
  border-left-width: 5px;
}
.nav-l.dark, .nav-r.dark {
  margin: 0;
}
.nav-l.dark { border-right-color: #333; }
.nav-r.dark { border-left-color: #333; }
.sheet-tab {
  width: 65px;
  height: 24px;
  margin-top: -1px;
  background: #fff;
  border: solid #a0a0a0;
  border-width: 0 1px;
  box-shadow: inset 0 -2px 0 #217346;
  color: #217346;
  font-size: 12.500px;
  font-weight: 700;
  line-height: 26px;
  text-align: center;
}
.add-sheet {
  width: 90px;
  padding: 5px 0 0 33px;
}
.tab-dots {
  width: 3px;
  height: 14px;
  margin: 6px 0 0 899px;
  background: radial-gradient(circle, #8a8a8a 1px, transparent 1.200px) center / 3px 5px repeat-y;
}
.hscroll {
  width: 730px;
  height: 15px;
  margin: 6px 0 0 12px;
  display: flex;
  background: #f0f0f0;
}
.hthumb {
  width: 662px;
  margin-right: 38px;
  background: #fff;
  border: 1px solid #a8a8a8;
}

/* status bar */
.statusbar {
  height: 21px;
  display: flex;
  align-items: center;
  background: #f3f3f3;
  border-top: 1px solid #d2d2d2;
  font-size: 11.300px;
}
.mode {
  width: 62px;
  padding-left: 12px;
}
.a11y {
  margin-left: 18px;
}
.a11y-text {
  margin-left: 2px;
  width: 1522px;
}
.views {
  display: flex;
  gap: 27px;
  width: 112px;
}
.zoom {
  display: flex;
  align-items: center;
  color: #a9a9a9;
}
.zoom-minus, .zoom-plus {
  display: block;
  width: 9px;
  height: 9px;
  background: linear-gradient(#b5b5b5, #b5b5b5) center / 100% 1px no-repeat;
}
.zoom-plus {
  background:
    linear-gradient(#b5b5b5, #b5b5b5) center / 100% 1px no-repeat,
    linear-gradient(#b5b5b5, #b5b5b5) center / 1px 100% no-repeat;
}
.slider {
  width: 100px;
  height: 1px;
  margin: 0 5px;
  background: #333;
  position: relative;
}
.slider i {
  position: absolute;
  left: 50px;
  top: -3px;
  width: 1px;
  height: 7px;
  background: #333;
}
.zoom span {
  margin-left: 12px;
}
```
